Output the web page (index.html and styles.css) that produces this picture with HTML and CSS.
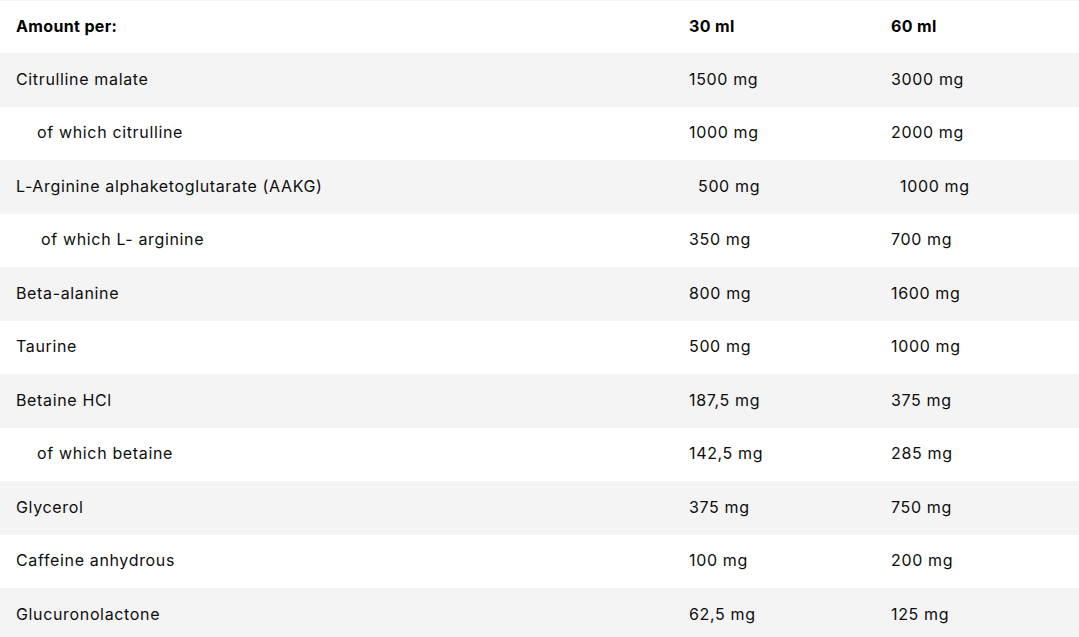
FILE: index.html
```html
<!DOCTYPE html>
<html>
<head>
<meta charset="utf-8">
<link rel="stylesheet" href="styles.css">
</head>
<body>
<table class="nutri">
  <colgroup><col class="c1"><col class="c2"><col class="c3"></colgroup>
  <thead>
    <tr class="head"><th>Amount per:</th><th>30 ml</th><th>60 ml</th></tr>
  </thead>
  <tbody>
    <tr><td>Citrulline malate</td><td>1500 mg</td><td>3000 mg</td></tr>
    <tr><td><span class="ind">of which citrulline</span></td><td>1000 mg</td><td>2000 mg</td></tr>
    <tr><td>L-Arginine alphaketoglutarate (AAKG)</td><td><span class="sh">500 mg</span></td><td><span class="sh">1000 mg</span></td></tr>
    <tr><td><span class="ind2">of which L- arginine</span></td><td>350 mg</td><td>700 mg</td></tr>
    <tr><td>Beta-alanine</td><td>800 mg</td><td>1600 mg</td></tr>
    <tr><td>Taurine</td><td>500 mg</td><td>1000 mg</td></tr>
    <tr><td>Betaine HCl</td><td>187,5 mg</td><td>375 mg</td></tr>
    <tr><td><span class="ind">of which betaine</span></td><td>142,5 mg</td><td>285 mg</td></tr>
    <tr><td>Glycerol</td><td>375 mg</td><td>750 mg</td></tr>
    <tr><td>Caffeine anhydrous</td><td>100 mg</td><td>200 mg</td></tr>
    <tr><td>Glucuronolactone</td><td>62,5 mg</td><td>125 mg</td></tr>
  </tbody>
</table>
</body>
</html>
```
FILE: styles.css
```css
html, body {
  margin: 0;
  padding: 0;
  background: #ffffff;
}
body {
  font-family: "Inter", "Open Sans", sans-serif;
  color: #0d0d0d;
  border-top: 1px solid #f4f4f4;
}
.nutri {
  width: 1079px;
  border-collapse: collapse;
  table-layout: fixed;
  font-size: 16px;
  letter-spacing: 0.65px;
}
.c1 { width: 673px; }
.c2 { width: 202px; }
.c3 { width: 204px; }
.nutri thead tr { height: 52px; }
.nutri tbody tr { height: 53.5px; }
.nutri th, .nutri td {
  padding: 0 0 2px 16px;
  text-align: left;
  vertical-align: middle;
  white-space: nowrap;
}
.nutri th {
  font-weight: 700;
  color: #000000;
  letter-spacing: 0.35px;
}
.nutri tbody tr:nth-child(odd) { background: #f4f4f4; }
.ind { padding-left: 21px; }
.ind2 { padding-left: 25px; }
.sh { padding-left: 9px; }
```
